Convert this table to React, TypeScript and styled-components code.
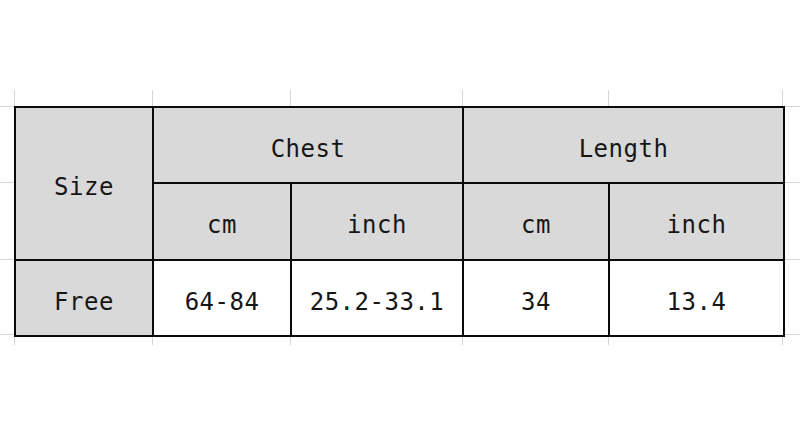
import React from "react";
import styled, { createGlobalStyle } from "styled-components";

const GlobalStyle = createGlobalStyle`
  html, body {
    margin: 0;
    padding: 0;
    background: #ffffff;
  }
  body {
    width: 800px;
    height: 434px;
    overflow: hidden;
    font-family: "DejaVu Sans Mono", "Liberation Mono", monospace;
  }
`;

const COLS = [138, 138, 172, 146, 175];
const ROWS = [76, 77, 76];
const GRID = "#d6d6d6";

const Sheet = styled.div`
  display: grid;
  grid-template-columns: 14px auto 1fr;
  grid-template-rows: 16px auto 8px;
  margin-top: 90px;
`;

const TickRow = styled.div`
  grid-column: 2;
  display: flex;
`;

const Tick = styled.div<{ $w: number; $last?: boolean }>`
  flex: 0 0 ${(p) => p.$w}px;
  border-left: 1px solid ${GRID};
  border-right: ${(p) => (p.$last ? `1px solid ${GRID}` : "none")};
  box-sizing: border-box;
`;

const Gutter = styled.div`
  display: flex;
  flex-direction: column;
`;

const GutterCell = styled.div<{ $h: number; $last?: boolean }>`
  flex: 0 0 ${(p) => p.$h}px;
  border-top: 1px solid ${GRID};
  border-bottom: ${(p) => (p.$last ? `1px solid ${GRID}` : "none")};
  box-sizing: border-box;
`;

const Table = styled.table`
  border-collapse: collapse;
  table-layout: fixed;
  width: 769px;
`;

const Row = styled.tr<{ $h: number }>`
  height: ${(p) => p.$h}px;
`;

const Cell = styled.td<{ $head?: boolean }>`
  border: 2px solid #0a0a0a;
  background: ${(p) => (p.$head ? "#d9d9d9" : "#ffffff")};
  color: #161616;
  text-align: center;
  vertical-align: middle;
  font-family: "DejaVu Sans Mono", "Liberation Mono", monospace;
  font-size: 24px;
  letter-spacing: 0.5px;
  padding: 7px 0 0;
  white-space: nowrap;
`;

export default function App() {
  return (
    <>
      <GlobalStyle />
      <Sheet>
        <div />
        <TickRow>
          {COLS.map((w, i) => (
            <Tick key={i} $w={w} $last={i === COLS.length - 1} />
          ))}
        </TickRow>
        <div />

        <Gutter>
          {ROWS.map((h, i) => (
            <GutterCell key={i} $h={h} $last={i === ROWS.length - 1} />
          ))}
        </Gutter>
        <Table>
          <colgroup>
            {COLS.map((w, i) => (
              <col key={i} style={{ width: w }} />
            ))}
          </colgroup>
          <tbody>
            <Row $h={ROWS[0]}>
              <Cell $head rowSpan={2}>Size</Cell>
              <Cell $head colSpan={2}>Chest</Cell>
              <Cell $head colSpan={2}>Length</Cell>
            </Row>
            <Row $h={ROWS[1]}>
              <Cell $head>cm</Cell>
              <Cell $head>inch</Cell>
              <Cell $head>cm</Cell>
              <Cell $head>inch</Cell>
            </Row>
            <Row $h={ROWS[2]}>
              <Cell $head>Free</Cell>
              <Cell>64-84</Cell>
              <Cell>25.2-33.1</Cell>
              <Cell>34</Cell>
              <Cell>13.4</Cell>
            </Row>
          </tbody>
        </Table>
        <Gutter>
          {ROWS.map((h, i) => (
            <GutterCell key={i} $h={h} $last={i === ROWS.length - 1} />
          ))}
        </Gutter>

        <div />
        <TickRow>
          {COLS.map((w, i) => (
            <Tick key={i} $w={w} $last={i === COLS.length - 1} />
          ))}
        </TickRow>
        <div />
      </Sheet>
    </>
  );
}
